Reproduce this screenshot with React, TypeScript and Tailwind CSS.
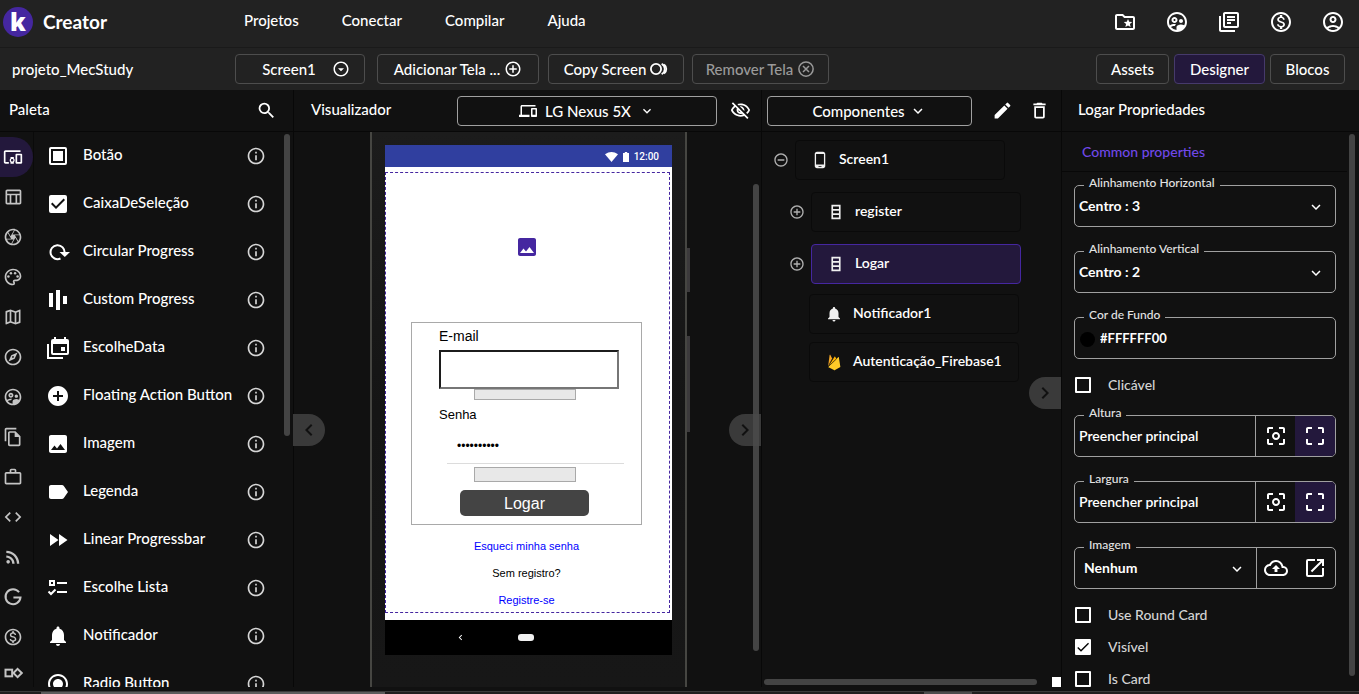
import React from "react";
import {
  MdAddCircle,
  MdAddCircleOutline,
  MdCheck,
  MdCenterFocusWeak,
  MdCheckBox,
  MdCode,
  MdCropFree,
  MdDeleteOutline,
  MdEdit,
  MdDevices,
  MdFastForward,
  MdImage,
  MdKeyboardArrowDown,
  MdKeyboardArrowLeft,
  MdKeyboardArrowRight,
  MdLabel,
  MdNotifications,
  MdOpenInNew,
  MdOutlineAccountCircle,
  MdOutlineArrowDropDownCircle,
  MdOutlineBackup,
  MdOutlineCamera,
  MdOutlineDevicesOther,
  MdOutlineExplore,
  MdOutlineFileCopy,
  MdOutlineInfo,
  MdOutlineLibraryBooks,
  MdOutlineMap,
  MdOutlineMonetizationOn,
  MdOutlinePalette,
  MdOutlineSupervisedUserCircle,
  MdOutlineTableChart,
  MdOutlineVisibilityOff,
  MdPhoneAndroid,
  MdRadioButtonChecked,
  MdRemoveCircleOutline,
  MdRssFeed,
  MdSearch,
  MdWorkOutline,
} from "react-icons/md";

type IconProps = { className?: string };
type Icon = React.ComponentType<IconProps>;

const svg = (children: React.ReactNode, viewBox = "0 0 24 24"): Icon =>
  function SvgIcon({ className }: IconProps) {
    return (
      <svg viewBox={viewBox} className={className} fill="currentColor" aria-hidden="true">
        {children}
      </svg>
    );
  };

const stroke = { fill: "none", stroke: "currentColor", strokeWidth: 2 };

const FolderStar = svg(
  <>
    <path d="M20 6h-8l-2-2H4c-1.1 0-2 .9-2 2v12c0 1.1.9 2 2 2h16c1.100 0 2-.9 2-2V8c0-1.100-.9-2-2-2zm0 12H4V6h5.170l2 2H20v10z" />
    <path d="M15 9l1.190 2.790 3.030.26-2.300 1.990.69 2.960L15 15.470 12.390 17l.69-2.960-2.300-1.990 3.030-.26z" />
  </>
);
const CopyRings = svg(
  <>
    <circle cx="8" cy="12" r="6.800" {...stroke} strokeWidth={2.400} />
    <path d="M15.500 5.200a7.600 7.600 0 0 1 0 13.600" {...stroke} strokeWidth={2.400} />
    <path d="M18.800 5.800a8 8 0 0 1 0 12.400" {...stroke} strokeWidth={2.400} />
  </>
);
const CancelRing = svg(
  <>
    <circle cx="12" cy="12" r="9.500" {...stroke} />
    <path d="M8 8l8 8M16 8l-8 8" {...stroke} />
  </>
);
const BoxIcon = svg(
  <>
    <rect x="4" y="4" width="16" height="16" rx="1" {...stroke} />
    <rect x="7" y="7" width="10" height="10" />
  </>
);
const CircularIcon = svg(
  <>
    <path d="M14.500 18.500A7 7 0 1 1 18.500 13" {...stroke} />
    <path d="M13.500 12H24l-5.200 5z" />
  </>
);
const BarsIcon = svg(
  <>
    <rect x="3" y="5" width="4" height="14" />
    <rect x="10" y="2" width="4" height="20" />
    <rect x="17" y="8" width="4" height="8" />
  </>
);
const DateIcon = svg(
  <>
    <path d="M2 8v14h15" {...stroke} />
    <path
      fillRule="evenodd"
      d="M8 1h2v2h8V1h2v2h1a2 2 0 0 1 2 2v12a2 2 0 0 1-2 2H7a2 2 0 0 1-2-2V5a2 2 0 0 1 2-2h1zM7 8v9h14V8zM15 11h4v4h-4z"
    />
  </>
);
const ChecklistIcon = svg(
  <>
    <rect x="4" y="5" width="4" height="4" {...stroke} />
    <path d="M11 7h10M11 16h10M2.500 15.500L5 18l4.500-4.500" {...stroke} />
  </>
);
const GoogleIcon = svg(<path d="M19.300 6.300A9 9 0 1 0 21 12.500h-8.500" {...stroke} strokeWidth={2.4} />);
const ExtensionIcon = svg(
  <>
    <rect x="3" y="8" width="8" height="8" {...stroke} strokeWidth={2.400} />
    <path d="M17.500 7l5 5-5 5-5-5z" {...stroke} strokeWidth={2.400} />
  </>
);
const VerticalIcon = svg(
  <path
    d="M7 3.500h10v17H7zM7 9.200h10M7 14.800h10"
    {...stroke}
    strokeWidth={2.200}
  />
);
const FirebaseIcon = svg(
  <>
    <path fill="#f9a825" d="M4 18.500L6.200 2.800c.1-.5.700-.6 1-.2l2.500 5z" />
    <path fill="#ffb300" d="M4 18.500L12.700 5c.2-.4.700-.4.900 0l1.600 3z" />
    <path fill="#ffca28" d="M4 18.500L17.600 5.600c.3-.3.800-.2.900.3L20.500 18.500l-7.100 4.200c-.5.300-1 .3-1.500 0z" />
    <path d="M4 18.500L9.700 7.600M4 18.500L15.200 8" fill="none" stroke="#111" strokeWidth="0.800" />
  </>
);

const PALETTE: [Icon, string][] = [
  [BoxIcon, "Botão"],
  [MdCheckBox, "CaixaDeSeleção"],
  [CircularIcon, "Circular Progress"],
  [BarsIcon, "Custom Progress"],
  [DateIcon, "EscolheData"],
  [MdAddCircle, "Floating Action Button"],
  [MdImage, "Imagem"],
  [MdLabel, "Legenda"],
  [MdFastForward, "Linear Progressbar"],
  [ChecklistIcon, "Escolhe Lista"],
  [MdNotifications, "Notificador"],
  [MdRadioButtonChecked, "Radio Button"],
];

const RAIL: [Icon, string][] = [
  [MdOutlineTableChart, "Layout"],
  [MdOutlineCamera, "Media"],
  [MdOutlinePalette, "Drawing"],
  [MdOutlineMap, "Maps"],
  [MdOutlineExplore, "Sensors"],
  [MdOutlineSupervisedUserCircle, "Social"],
  [MdOutlineFileCopy, "Storage"],
  [MdWorkOutline, "Utilities"],
  [MdCode, "Code"],
  [MdRssFeed, "Connectivity"],
  [GoogleIcon, "Google"],
  [MdOutlineMonetizationOn, "Monetization"],
  [ExtensionIcon, "Extensions"],
];

const ACTIONS: [Icon, string][] = [
  [FolderStar, "Projetos favoritos"],
  [MdOutlineSupervisedUserCircle, "Comunidade"],
  [MdOutlineLibraryBooks, "Documentação"],
  [MdOutlineMonetizationOn, "Planos"],
  [MdOutlineAccountCircle, "Conta"],
];

function Header() {
  return (
    <header className="flex h-12 shrink-0 items-center border-b border-[#1a1a1a] bg-[#222] pr-[14px] pb-1 pl-[3px]">
      <div className="flex w-[241px] items-center gap-[10px]">
        <span className="flex size-[30px] items-center justify-center rounded-full bg-[#4527a0] font-['Open_Sans',sans-serif] text-[24px] leading-none font-extrabold">
          k
        </span>
        <span className="text-[19px] font-bold">Creator</span>
      </div>
      <nav className="flex flex-1 gap-[43px] pb-[3px]">
        <a href="#projetos">Projetos</a>
        <a href="#conectar">Conectar</a>
        <a href="#compilar">Compilar</a>
        <a href="#ajuda">Ajuda</a>
      </nav>
      <div className="flex gap-7">
        {ACTIONS.map(([I, label]) => (
          <button key={label} aria-label={label}>
            <I className="size-6" />
          </button>
        ))}
      </div>
    </header>
  );
}

function Toolbar() {
  const base = "flex h-[30px] items-center justify-center rounded-[4px] border border-[#4d4d4d]";
  return (
    <div className="flex h-[42px] shrink-0 items-center bg-[#222] pr-[14px]">
      <div className="w-[235px] pl-3">projeto_MecStudy</div>
      <div className="flex flex-1 gap-2">
        <button className={`${base} mr-1 w-[130px] gap-4 pl-3`}>
          Screen1 <MdOutlineArrowDropDownCircle className="size-[18px]" />
        </button>
        <button className={`${base} w-[162px] gap-1`}>
          Adicionar Tela ... <MdAddCircleOutline className="size-[18px]" />
        </button>
        <button className={`${base} ml-px w-[136px] gap-1`}>
          Copy Screen <CopyRings className="size-[18px]" />
        </button>
        <button className={`${base} w-[137px] gap-1 text-[#9a9a9a]`}>
          Remover Tela <CancelRing className="size-[18px]" />
        </button>
      </div>
      <div className="flex gap-[5px]">
        <button className={`${base} w-[73px]`}>Assets</button>
        <button className="flex h-[30px] w-[91px] items-center justify-center rounded-[4px] border border-[#463a6b] bg-[#23183c]">
          Designer
        </button>
        <button className={`${base} w-[75px]`}>Blocos</button>
      </div>
    </div>
  );
}

const panelHead = "flex h-[42px] shrink-0 items-center border-b border-[#080808]";

function Palette() {
  return (
    <section className="flex w-[293px] shrink-0 flex-col">
      <div className={`${panelHead} justify-between pr-4 pl-[9px]`}>
        <h2 className="pb-1">Paleta</h2>
        <button aria-label="Pesquisar">
          <MdSearch className="size-[21px]" />
        </button>
      </div>
      <div className="relative flex min-h-0 flex-1 overflow-hidden">
        <div className="flex w-[34px] shrink-0 flex-col border-r border-[#0a0a0a] pt-[5px] text-[#c4c4c4]">
          <button aria-label="User Interface" className="flex h-10 w-[33px] shrink-0 items-center rounded-r-full bg-[#23183c] pl-[3px] text-white">
            <MdOutlineDevicesOther className="size-5" />
          </button>
          {RAIL.map(([I, label]) => (
            <button key={label} aria-label={label} className="flex h-10 shrink-0 items-center pl-[3px] last:h-8">
              <I className="size-5" />
            </button>
          ))}
        </div>
        <ul className="flex-1">
          {PALETTE.map(([I, label]) => (
            <li key={label} className="flex h-12 items-center gap-[13px] pr-[27px] pl-3">
              <I className="size-6" />
              <span className="flex-1 pb-1">{label}</span>
              <button aria-label={`Sobre ${label}`}>
                <MdOutlineInfo className="size-5 text-[#d6d6d6]" />
              </button>
            </li>
          ))}
        </ul>
        <div className="absolute top-[2px] right-[3px] h-[302px] w-[6px] rounded-full bg-[#444]" />
      </div>
    </section>
  );
}

function PhoneScreen() {
  return (
    <div className="flex h-[510px] w-[287px] flex-col bg-white font-['Liberation_Sans',Arial,sans-serif] text-black">
      <div className="flex h-[22px] items-center justify-end gap-[5px] bg-[#303f9f] pr-[13px] pt-[2px] font-['Roboto',sans-serif] text-[10px] font-medium text-white">
        <svg viewBox="0 0 13 10" className="h-[10px] w-[13px]" fill="currentColor" aria-hidden="true">
          <path d="M6.500 10L0 2.300Q6.500-2.300 13 2.300z" />
        </svg>
        <svg viewBox="0 0 6 10" className="h-[10px] w-[6px]" fill="currentColor" aria-hidden="true">
          <path d="M0 1h1.800V0h2.400v1H6v9H0z" />
        </svg>
        <span>12:00</span>
      </div>
      <div className="mt-[5px] mr-[2px] flex h-[441px] flex-col items-center border border-dashed border-[#4527a0] pt-[62px] pr-[2px]">
        <MdImage className="size-6 text-[#4527a0]" />
        <form className="mt-[63px] flex h-[203px] w-[231px] shrink-0 flex-col items-center border border-[#a9a9a9] pr-1" onSubmit={(e) => e.preventDefault()}>
          <label htmlFor="email" className="ml-1 h-[27px] w-[175px] pt-1 text-[14px] leading-[18px]">
            E-mail
          </label>
          <input
            id="email"
            type="email"
            className="ml-2 h-[39px] w-[180px] border-2 border-t-[#1c1c1c] border-r-[#767676] border-b-[#767676] border-l-[#1c1c1c] px-2 text-[13px] outline-none"
          />
          <button type="button" aria-label="Validar e-mail" className="h-[11px] w-[102px] border border-[#a9a9a9] bg-[#e8e8e8]" />
          <label htmlFor="senha" className="ml-1 h-7 w-[175px] pt-[6px] text-[13px] leading-[18px]">
            Senha
          </label>
          <input
            id="senha"
            type="password"
            defaultValue="1234567890"
            className="ml-[22px] h-9 w-[177px] border-b border-[#dcdcdc] px-[10px] pt-0 text-[12px] outline-none"
          />
          <button type="button" aria-label="Validar senha" className="mt-[3px] h-[15px] w-[102px] border border-[#a9a9a9] bg-[#e8e8e8]" />
          <button className="mt-2 h-[26px] w-[129px] rounded-[5px] bg-[#444] text-[16px] leading-[28px] text-white">Logar</button>
        </form>
        <div className="flex flex-col items-center gap-[11px] pt-[13px] text-[11px] leading-4">
          <a href="#senha" className="text-[#0000ff]">Esqueci minha senha</a>
          <span>Sem registro?</span>
          <a href="#registro" className="text-[#0000ff]">Registre-se</a>
        </div>
      </div>
      <div className="mt-auto flex h-[35px] items-center bg-black pl-[70px] text-white">
        <MdKeyboardArrowLeft className="mr-[52px] size-[11px]" />
        <span className="h-[7px] w-4 rounded-[3px] bg-[#f0f0f0]" />
      </div>
    </div>
  );
}

function Viewer() {
  return (
    <section className="flex min-w-0 flex-1 flex-col border-l border-[#080808]">
      <div className={`${panelHead} gap-[13px] pr-[10px] pl-[17px]`}>
        <h2 className="flex-1 pb-1">Visualizador</h2>
        <button className="flex h-[30px] w-[260px] items-center justify-center gap-2 rounded-[4px] border border-[#a0a0a0]">
          <MdDevices className="size-[18px]" />
          LG Nexus 5X
          <MdKeyboardArrowDown className="size-4" />
        </button>
        <button aria-label="Mostrar ocultos">
          <MdOutlineVisibilityOff className="size-[21px]" />
        </button>
      </div>
      <div className="relative flex min-h-0 flex-1 justify-center">
        <div className="relative ml-[2px] w-[317px] border-x-2 border-[#464642] bg-gradient-to-b from-[#1c1c1c] via-[#151515] to-[#171717] pt-[13px] pl-[13px]">
          <PhoneScreen />
          <span className="absolute top-[116px] -right-[5px] h-11 w-[3px] bg-[#3c3a3c]" />
          <span className="absolute top-[204px] -right-[5px] h-24 w-[3px] bg-[#3c3a3c]" />
        </div>
        <button aria-label="Recolher paleta" className="absolute top-[282px] -left-px flex size-8 items-center justify-center rounded-r-full bg-[#3a3a3a] text-[#111]">
          <MdKeyboardArrowLeft className="size-6" />
        </button>
        <button aria-label="Recolher componentes" className="absolute top-[282px] right-0 flex size-8 items-center justify-center rounded-l-full bg-[#3a3a3a] text-[#111]">
          <MdKeyboardArrowRight className="size-6" />
        </button>
        <div className="absolute top-[52px] right-[2px] h-[467px] w-[6px] rounded-full bg-[#4a4a4a]/90" />
      </div>
    </section>
  );
}

function TreeNode({ icon: I, label, toggle: Toggle, selected, className }: { icon: Icon; label: string; toggle?: Icon; selected?: boolean; className: string }) {
  return (
    <li className={`flex items-center gap-[6px] text-[14px] ${className}`}>
      {Toggle && (
        <button aria-label={`Alternar ${label}`}>
          <Toggle className="size-4 text-[#b0b0b0]" />
        </button>
      )}
      <button
        className={
          selected
            ? "flex h-10 w-[210px] items-center gap-[10px] rounded-[4px] border border-[#4527a0] bg-[#23183c] pl-[15px]"
            : "flex h-10 w-[210px] items-center gap-[10px] rounded-[4px] border border-[#0a0a0a] pl-[15px]"
        }
      >
        <I className="size-[18px] text-[#f0f0f0]" />
        <span className="pb-[2px] font-semibold">{label}</span>
      </button>
    </li>
  );
}

function Components() {
  return (
    <section className="flex w-[300px] shrink-0 flex-col border-l border-[#080808]">
      <div className={`${panelHead} pr-[10px] pl-[5px]`}>
        <button className="mr-5 flex h-[30px] w-[205px] items-center justify-center gap-1 rounded-[4px] border border-[#a0a0a0]">
          Componentes <MdKeyboardArrowDown className="size-[18px]" />
        </button>
        <button aria-label="Renomear" className="mr-4">
          <MdEdit className="size-[21px]" />
        </button>
        <button aria-label="Excluir">
          <MdDeleteOutline className="size-[21px]" />
        </button>
      </div>
      <div className="relative min-h-0 flex-1">
        <ul className="pt-2">
          <TreeNode icon={MdPhoneAndroid} label="Screen1" toggle={MdRemoveCircleOutline} className="pl-[11px]" />
          <TreeNode icon={VerticalIcon} label="register" toggle={MdAddCircleOutline} className="mt-3 pl-[27px]" />
          <TreeNode icon={VerticalIcon} label="Logar" toggle={MdAddCircleOutline} selected className="mt-3 pl-[27px]" />
          <TreeNode icon={MdNotifications} label="Notificador1" className="mt-[10px] pl-[47px]" />
          <TreeNode icon={FirebaseIcon} label="Autenticação_Firebase1" className="mt-2 pl-[47px]" />
        </ul>
        <button aria-label="Recolher propriedades" className="absolute top-[245px] right-0 flex size-8 items-center justify-center rounded-l-full bg-[#3a3a3a] text-[#111]">
          <MdKeyboardArrowRight className="size-6" />
        </button>
        <div className="absolute right-6 bottom-[2px] left-[2px] h-[6px] rounded-full bg-[#444]" />
        <div className="absolute right-0 bottom-0 h-[10px] w-[9px] bg-white" />
      </div>
    </section>
  );
}

function Field({ id, label, children }: { id: string; label: string; children: React.ReactNode }) {
  return (
    <div className="relative mt-[14px] mb-[10px] flex h-[42px] shrink-0 rounded-[5px] border border-[#a0a0a0]">
      <label htmlFor={id} className="absolute -top-[11px] left-[9px] z-10 bg-[#111] px-[5px] text-[12px] leading-4 text-[#e4e4e4]">
        {label}
      </label>
      {children}
    </div>
  );
}

function SelectBox({ id, options, className }: { id: string; options: string[]; className: string }) {
  return (
    <div className="relative flex-1">
      <select id={id} className={`h-full w-full appearance-none bg-transparent font-bold outline-none ${className}`}>
        {options.map((o) => (
          <option key={o}>{o}</option>
        ))}
      </select>
      <MdKeyboardArrowDown className="pointer-events-none absolute top-3 right-[10px] size-[18px]" />
    </div>
  );
}

function Dimension({ id, label }: { id: string; label: string }) {
  return (
    <Field id={id} label={label}>
      <input id={id} defaultValue="Preencher principal" className="min-w-0 flex-1 bg-transparent pl-[4px] text-[14px] font-semibold outline-none" />
      <button aria-label="Ajustar ao conteúdo" className="flex w-10 items-center justify-center border-l border-[#a0a0a0]">
        <MdCenterFocusWeak className="size-6" />
      </button>
      <button aria-label="Preencher" className="flex w-10 items-center justify-center rounded-r-[4px] bg-[#23183c]">
        <MdCropFree className="size-6" />
      </button>
    </Field>
  );
}

function Check({ label, checked }: { label: string; checked?: boolean }) {
  return (
    <label className="flex h-8 shrink-0 items-center gap-[17px] pl-px text-[14px] text-[#d4d4d4]">
      <span className="relative flex size-4">
        <input type="checkbox" defaultChecked={checked} className="peer size-4 appearance-none rounded-[1px] border-2 border-white checked:bg-white" />
        <MdCheck className="pointer-events-none absolute inset-0 hidden size-4 text-black peer-checked:block" />
      </span>
      {label}
    </label>
  );
}

function Properties() {
  return (
    <section className="flex w-[298px] shrink-0 flex-col border-l border-[#080808]">
      <div className={`${panelHead} pb-1 pl-4`}>
        <h2>Logar Propriedades</h2>
      </div>
      <div className="relative min-h-0 flex-1 overflow-hidden">
        <h3 className="mr-3 flex h-10 items-center border-b border-[#080808] pl-5 text-[14px] text-[#7048e8]">Common properties</h3>
        <div className="-mt-px flex flex-col pr-[23px] pl-3">
          <Field id="align-h" label="Alinhamento Horizontal">
            <SelectBox id="align-h" options={["Centro : 3", "Esquerda : 1", "Direita : 2"]} className="pl-[4px] text-[14px]" />
          </Field>
          <Field id="align-v" label="Alinhamento Vertical">
            <SelectBox id="align-v" options={["Centro : 2", "Topo : 1", "Base : 3"]} className="pl-[4px] text-[14px]" />
          </Field>
          <Field id="bg-color" label="Cor de Fundo">
            <span className="mt-[14px] ml-[5px] size-[15px] shrink-0 rounded-full bg-black" />
            <input id="bg-color" defaultValue="#FFFFFF00" className="min-w-0 flex-1 bg-transparent pl-[5px] text-[13px] font-bold outline-none" />
          </Field>
          <Check label="Clicável" />
          <Dimension id="altura" label="Altura" />
          <Dimension id="largura" label="Largura" />
          <Field id="imagem" label="Imagem">
            <SelectBox id="imagem" options={["Nenhum"]} className="pl-[9px] text-[14px]" />
            <button aria-label="Enviar imagem" className="flex w-[39px] items-center justify-center border-l border-[#a0a0a0]">
              <MdOutlineBackup className="size-6" />
            </button>
            <button aria-label="Abrir imagem" className="flex w-10 items-center justify-center">
              <MdOpenInNew className="size-6" />
            </button>
          </Field>
          <Check label="Use Round Card" />
          <Check label="Visível" checked />
          <Check label="Is Card" />
        </div>
        <div className="absolute top-[2px] right-1 h-[542px] w-[6px] rounded-full bg-[#444]" />
      </div>
    </section>
  );
}

export default function App() {
  return (
    <div className="flex h-screen flex-col overflow-hidden bg-[#111] font-['Lato',sans-serif] text-[15px] leading-5 font-medium text-white">
      <Header />
      <Toolbar />
      <main className="flex min-h-0 flex-1 pb-1">
        <Palette />
        <Viewer />
        <Components />
        <Properties />
      </main>
      <div className="flex h-[3px] shrink-0 border-t border-[#3a3a3a] bg-[#201e1e]">
        <span className="ml-[41px] w-[344px] bg-[#5c5c5c]" />
        <span className="ml-auto mr-[387px] w-12 bg-[#4c4c4c]" />
      </div>
    </div>
  );
}
